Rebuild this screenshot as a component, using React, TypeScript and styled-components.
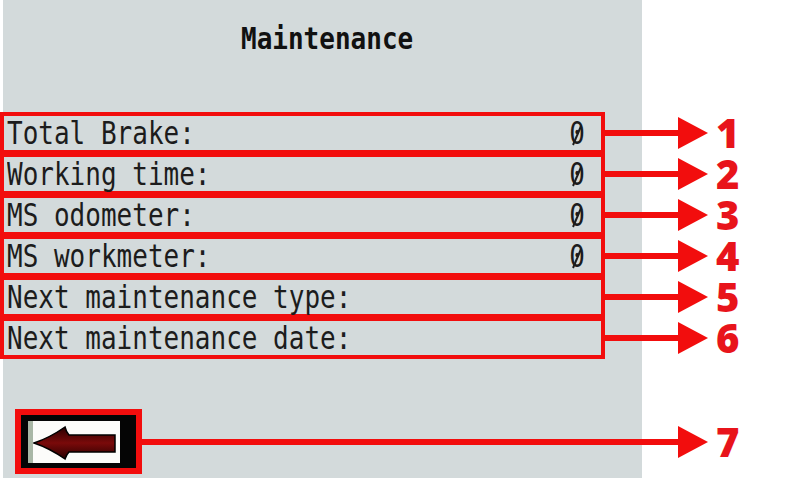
import React from "react";
import styled, { createGlobalStyle } from "styled-components";

const Global = createGlobalStyle`
  html, body { margin: 0; padding: 0; background: #ffffff; }
  body { font-family: "DejaVu Sans Mono", "Liberation Mono", monospace; }
`;

const RED = "#f20d0d";
const PANEL = "#d3dadb";

const Page = styled.div`
  width: 786px;
  height: 480px;
  overflow: hidden;
  background-color: #ffffff;
  background-image: linear-gradient(
    to right,
    #ffffff 0 3px,
    ${PANEL} 3px 642px,
    #ffffff 642px
  );
  background-size: 100% 478px;
  background-repeat: no-repeat;
  display: flex;
  flex-direction: column;
`;

const Header = styled.header`
  height: 112px;
  box-sizing: border-box;
  padding: 22px 0 0 241px;
`;

const Title = styled.h1`
  margin: 0;
  display: inline-block;
  font-family: "DejaVu Sans Mono", monospace;
  font-weight: 700;
  font-size: 26px;
  line-height: 34px;
  color: #111;
  transform: scaleY(1.15);
`;

const List = styled.div`
  display: flex;
  flex-direction: column;
`;

const Row = styled.div<{ $first?: boolean }>`
  display: flex;
  align-items: center;
  margin-top: ${(p) => (p.$first ? 0 : -1)}px;
`;

const Field = styled.div`
  width: 605px;
  height: 42px;
  box-sizing: border-box;
  border: 4px solid ${RED};
  display: flex;
  align-items: center;
  justify-content: space-between;
  padding: 0 16px 0 3px;
`;

const Label = styled.span`
  display: inline-block;
  font-size: 26px;
  line-height: 34px;
  color: #1c1c1c;
  white-space: pre;
  transform: scaleY(1.26);
`;

const Value = styled(Label)<{ $slashed?: boolean }>`
  position: relative;
  &::after {
    content: "";
    display: ${(p) => (p.$slashed ? "block" : "none")};
    position: absolute;
    left: 50%;
    top: 50%;
    width: 2px;
    height: 17px;
    background: #1c1c1c;
    transform: translate(-50%, -38%) rotate(28deg);
  }
`;

const Line = styled.div`
  flex: 1;
  height: 6px;
  background: ${RED};
`;

const Head = styled.div`
  width: 0;
  height: 0;
  border-left: 30px solid ${RED};
  border-top: 16px solid transparent;
  border-bottom: 16px solid transparent;
`;

const Num = styled.span`
  width: 78px;
  box-sizing: border-box;
  padding-left: 8px;
  font-family: "Open Sans", "Liberation Sans", sans-serif;
  font-weight: 800;
  font-size: 40px;
  line-height: 32px;
  color: #e8141b;
`;

const Footer = styled.div`
  margin-top: 50px;
  display: flex;
  align-items: center;
`;

const ButtonBox = styled.div`
  margin-left: 15px;
  width: 127px;
  height: 65px;
  box-sizing: border-box;
  border: 6px solid ${RED};
  background: #050505;
  padding: 6px 16px 5px 7px;
  display: flex;
`;

const ButtonFace = styled.button`
  flex: 1;
  margin: 0;
  padding: 0;
  border: none;
  border-left: 5px solid #a9b7a6;
  background: #fcfcfa;
  display: flex;
  align-items: center;
  justify-content: flex-start;
  cursor: pointer;
`;

const BackArrow = () => (
  <svg width="87" height="41" viewBox="0 0 87 41">
    <defs>
      <linearGradient id="shaft" x1="0" y1="0" x2="0" y2="1">
        <stop offset="0" stopColor="#2a0000" />
        <stop offset="0.5" stopColor="#7a0a0a" />
        <stop offset="1" stopColor="#2a0000" />
      </linearGradient>
    </defs>
    <path
      d="M1 21 C 10 18, 22 12, 32 5 C 33 9, 34 11, 36 13 L 82 13 L 82 30 L 36 30 C 34 32, 33 34, 32 37 C 22 30, 10 24, 1 21 Z"
      fill="url(#shaft)"
      stroke="#000"
      strokeWidth="1.5"
    />
  </svg>
);

const rows = [
  { label: "Total Brake:", value: "0" },
  { label: "Working time:", value: "0" },
  { label: "MS odometer:", value: "0" },
  { label: "MS workmeter:", value: "0" },
  { label: "Next maintenance type:", value: "" },
  { label: "Next maintenance date:", value: "" },
];

export default function App() {
  return (
    <>
      <Global />
      <Page>
        <Header>
          <Title>Maintenance</Title>
        </Header>
        <List>
          {rows.map((r, i) => (
            <Row key={r.label} $first={i === 0}>
              <Field>
                <Label>{r.label}</Label>
                <Value $slashed={r.value === "0"}>{r.value}</Value>
              </Field>
              <Line />
              <Head />
              <Num>{i + 1}</Num>
            </Row>
          ))}
        </List>
        <Footer>
          <ButtonBox>
            <ButtonFace aria-label="Back">
              <BackArrow />
            </ButtonFace>
          </ButtonBox>
          <Line />
          <Head />
          <Num>7</Num>
        </Footer>
      </Page>
    </>
  );
}
